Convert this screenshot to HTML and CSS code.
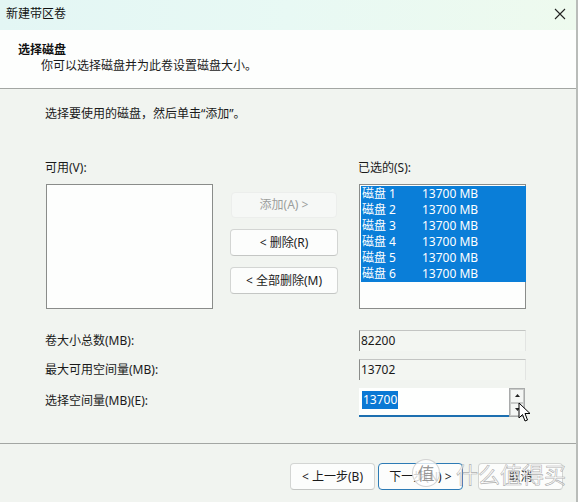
FILE: index.html
```html
<!DOCTYPE html>
<html lang="zh-CN">
<head>
<meta charset="utf-8">
<title>新建带区卷</title>
<link rel="stylesheet" href="styles.css">
</head>
<body>
<div class="window">
  <div class="titlebar">
    <span class="title">新建带区卷</span>
    <svg class="close" width="12" height="12" viewBox="0 0 12 12"><path d="M1 1 L11 11 M11 1 L1 11" stroke="#222" stroke-width="1.1" fill="none"/></svg>
  </div>
  <div class="header">
    <div class="h-title">选择磁盘</div>
    <div class="h-sub">你可以选择磁盘并为此卷设置磁盘大小。</div>
  </div>
  <div class="content">
    <div class="intro">选择要使用的磁盘，然后单击“添加”。</div>
    <div class="lists">
      <div class="list-col">
        <div class="label">可用(V):</div>
        <div class="listbox"></div>
      </div>
      <div class="btn-col">
        <button class="btn disabled">添加(A) &gt;</button>
        <button class="btn">&lt; 删除(R)</button>
        <button class="btn">&lt; 全部删除(M)</button>
      </div>
      <div class="list-col">
        <div class="label">已选的(S):</div>
        <div class="listbox">
          <div class="item"><span class="name">磁盘 1</span><span>13700 MB</span></div>
          <div class="item"><span class="name">磁盘 2</span><span>13700 MB</span></div>
          <div class="item"><span class="name">磁盘 3</span><span>13700 MB</span></div>
          <div class="item"><span class="name">磁盘 4</span><span>13700 MB</span></div>
          <div class="item"><span class="name">磁盘 5</span><span>13700 MB</span></div>
          <div class="item"><span class="name">磁盘 6</span><span>13700 MB</span></div>
        </div>
      </div>
    </div>
    <div class="fields">
      <div class="f-label">卷大小总数(MB):</div>
      <div class="ro">82200</div>
      <div class="f-label">最大可用空间量(MB):</div>
      <div class="ro">13702</div>
      <div class="f-label tall">选择空间量(MB)(E):</div>
      <div class="spin">
        <div class="edit"><span class="sel">13700</span></div>
        <div class="arrows">
          <div class="arr"><svg width="5" height="3" viewBox="0 0 5 3"><path d="M0 3 L2.5 0 L5 3 Z" fill="#222"/></svg></div>
          <div class="arr"><svg width="5" height="3" viewBox="0 0 5 3"><path d="M0 0 L2.5 3 L5 0 Z" fill="#222"/></svg></div>
        </div>
        <svg class="cursor" width="14" height="21" viewBox="0 0 14 21"><path d="M1 1 L1 16 L4.5 12.5 L7 19 L9.5 18 L7 11.5 L12 11.5 Z" fill="#fff" stroke="#000" stroke-width="1"/></svg>
      </div>
    </div>
  </div>
  <div class="footer">
    <button class="btn fbtn">&lt; 上一步(B)</button>
    <button class="btn fbtn default">下一步(N) &gt;</button>
    <button class="btn fbtn cancel">取消</button>
    <div class="watermark"><span class="wm-circle">值</span><span class="wm-text">什么值得买</span></div>
  </div>
</div>
</body>
</html>
```
FILE: styles.css
```css
* { box-sizing: border-box; }
html, body { margin: 0; padding: 0; }
body {
  width: 578px;
  height: 502px;
  overflow: hidden;
  font-family: "Noto Sans", "Noto Sans CJK SC", sans-serif;
  font-size: 12px;
  color: #1a1a1a;
  background: #f1f4f0;
}
.window {
  width: 578px;
  height: 502px;
  display: flex;
  flex-direction: column;
  background: #f1f4f0;
  border-right: 2px solid #b9bcb9;
  position: relative;
}
.titlebar {
  height: 30px;
  flex: none;
  display: flex;
  align-items: center;
  justify-content: space-between;
  padding: 0 10px 0 6px;
  background: linear-gradient(90deg, #e3f6f4 0%, #e8f9f4 50%, #eefaee 100%);
}
.title { font-size: 12px; line-height: 16px; margin-top: -2px; color: #111; }
.close { margin-top: -2px; }
.header {
  height: 59px;
  flex: none;
  background: #fdfefd;
  border-bottom: 1px solid #a3a6a3;
  padding: 12px 0 0 18px;
}
.h-title { font-weight: bold; line-height: 16px; color: #111; }
.h-sub { line-height: 16px; padding-left: 23px; margin-top: 0; }
.content {
  flex: 1;
  padding: 17px 0 0 45px;
  display: flex;
  flex-direction: column;
}
.intro { line-height: 16px; }
.lists {
  display: flex;
  margin-top: 38px;
}
.list-col { display: flex; flex-direction: column; width: 168px; }
.label { line-height: 16px; height: 16px; margin-bottom: 8px; }
.listbox {
  height: 125px;
  background: #fdfefd;
  border: 1px solid #8a8c8a;
  padding: 1px 0 0 1px;
  margin-left: 1px;
}
.item {
  display: flex;
  height: 16px;
  line-height: 16px;
  background: #0a7ed8;
  color: #fff;
  font-size: 12px;
  padding-left: 1px;
  width: 165px;
}
.item .name { width: 60px; }
.btn-col {
  width: 108px;
  margin: 32px 20px 0 17px;
  display: flex;
  flex-direction: column;
  gap: 11px;
}
.btn {
  font-family: inherit;
  font-size: 12px;
  color: #1a1a1a;
  height: 27px;
  background: #fcfdfc;
  border: 1px solid #d3d5d3;
  border-bottom-color: #c4c6c4;
  border-radius: 4px;
  padding: 0;
  line-height: 16px;
}
.btn.disabled {
  background: #f6f8f6;
  border-color: #eceeec;
  color: #9c9e9c;
  height: 26px;
  width: 106px;
  margin-left: 1px;
}
.fields {
  display: grid;
  grid-template-columns: 314px 167px;
  grid-template-rows: 21px 21px 29px;
  row-gap: 8px;
  margin-top: 21px;
}
.f-label { line-height: 21px; }
.f-label.tall { line-height: 26px; }
.ro {
  border-top: 1px solid #c3c5c3;
  border-left: 1px solid #8a8c8a;
  border-right: 1px solid #e2e4e2;
  background: #f3f6f2;
  line-height: 19px;
  padding-left: 1px;
}
.spin {
  display: flex;
  position: relative;
}
.edit {
  width: 150px;
  background: #fefffe;
  border-bottom: 2px solid #1c6fb0;
  padding: 3px 0 0 3px;
}
.sel {
  background: #0a78d4;
  color: #fff;
  display: inline-block;
  line-height: 18px;
  padding: 0 1px;
}
.arrows {
  width: 16px;
  display: flex;
  flex-direction: column;
  border: 1px solid #a9abab;
  background: #f4f6f4;
}
.arr {
  flex: 1;
  display: flex;
  align-items: center;
  justify-content: center;
  border: 1px solid #c9cbc9;
}
.cursor {
  position: absolute;
  left: 159px;
  top: 14px;
}
.footer {
  height: 59px;
  flex: none;
  border-top: 1px solid #a3a6a3;
  display: flex;
  align-items: flex-start;
  padding: 19px 0 0 290px;
  position: relative;
}
.fbtn { width: 85px; margin-right: 3px; }
.fbtn.default { border: 1px solid #2d7bb5; }
.fbtn.cancel { margin-left: 12px; }
.watermark {
  position: absolute;
  left: 412px;
  top: 15px;
  display: flex;
  align-items: center;
  pointer-events: none;
}
.wm-circle {
  width: 28px;
  height: 28px;
  border-radius: 50%;
  background: rgba(255,255,255,0.8);
  border: 1px solid rgba(170,170,170,0.5);
  color: rgba(140,140,140,0.9);
  font-family: "Noto Sans CJK SC", sans-serif;
  font-size: 17px;
  line-height: 26px;
  text-align: center;
  margin-right: 16px;
}
.wm-text {
  font-family: "Noto Sans CJK SC", sans-serif;
  font-size: 22px;
  line-height: 28px;
  color: rgba(255,255,255,0.75);
  -webkit-text-stroke: 0.6px rgba(140,140,140,0.7);
}
```
